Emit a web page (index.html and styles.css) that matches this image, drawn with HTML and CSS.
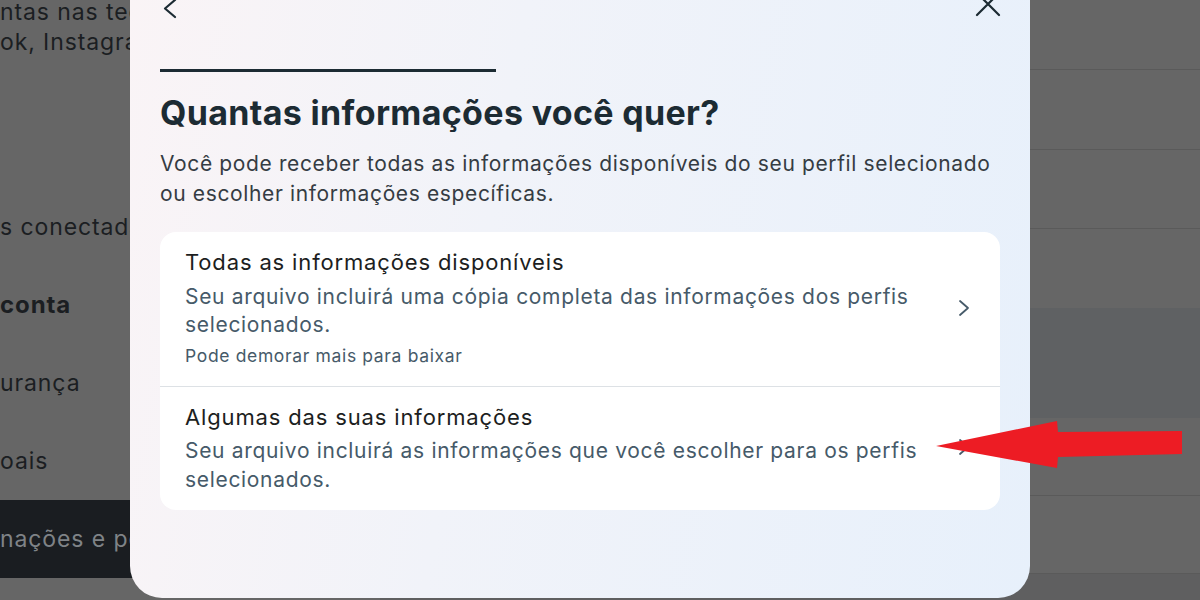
FILE: index.html
```html
<!DOCTYPE html>
<html lang="pt-BR">
<head>
<meta charset="utf-8">
<title>Baixar suas informações</title>
<link rel="stylesheet" href="styles.css">
</head>
<body>
<div class="page">
  <aside class="side">
    <p class="intro">ntas nas tecnologias da Meta<br>ok, Instagram e Meta Horizon.</p>
    <nav class="nav">
      <div class="nav-item">s conectadas</div>
      <div class="nav-item nav-head">conta</div>
      <div class="nav-item">urança</div>
      <div class="nav-item">oais</div>
      <div class="nav-item nav-active">nações e permissões</div>
    </nav>
  </aside>
  <main class="content">
    <div class="row r1"></div>
    <div class="row r2"></div>
    <div class="row r3"></div>
    <div class="row r4"></div>
    <div class="row r5 hl"></div>
    <div class="row r6"></div>
    <div class="row r7"></div>
    <div class="row r8"></div>
  </main>
</div>

<section class="modal">
  <header class="modal-head">
    <svg class="icon-back" width="18" height="20" viewBox="0 0 18 20"><path d="M13 1 L3 9.5 L13 18" fill="none" stroke="#1c2b33" stroke-width="2.2" stroke-linecap="round" stroke-linejoin="round"/></svg>
    <svg class="icon-close" width="26" height="26" viewBox="0 0 26 26"><path d="M2 2 L24 24 M24 2 L2 24" fill="none" stroke="#1c2b33" stroke-width="2.2" stroke-linecap="round"/></svg>
  </header>
  <div class="progress"></div>
  <h1 class="title">Quantas informações você quer?</h1>
  <p class="subtitle">Você pode receber todas as informações disponíveis do seu perfil selecionado ou escolher informações específicas.</p>
  <div class="card">
    <div class="option">
      <div class="option-text">
        <div class="option-title">Todas as informações disponíveis</div>
        <div class="option-desc">Seu arquivo incluirá uma cópia completa das informações dos perfis selecionados.</div>
        <div class="option-note">Pode demorar mais para baixar</div>
      </div>
      <svg class="chev" width="12" height="18" viewBox="0 0 12 18"><path d="M2 2 L10 9 L2 16" fill="none" stroke="#465a69" stroke-width="1.8" stroke-linecap="round" stroke-linejoin="round"/></svg>
    </div>
    <div class="option">
      <div class="option-text">
        <div class="option-title">Algumas das suas informações</div>
        <div class="option-desc">Seu arquivo incluirá as informações que você escolher para os perfis selecionados.</div>
      </div>
      <svg class="chev" width="12" height="18" viewBox="0 0 12 18"><path d="M2 2 L10 9 L2 16" fill="none" stroke="#465a69" stroke-width="1.8" stroke-linecap="round" stroke-linejoin="round"/></svg>
    </div>
  </div>
</section>

<svg class="arrow" width="260" height="60" viewBox="930 415 260 60">
  <polygon points="936,446 1057,421 1058,432 1182,431 1182,454 1058,457 1057,468" fill="#ed1c24"/>
</svg>
</body>
</html>
```

FILE: styles.css
```css
* { box-sizing: border-box; }
html, body {
  margin: 0;
  padding: 0;
}
body {
  width: 1200px;
  height: 600px;
  overflow: hidden;
  position: relative;
  font-family: Inter, "Noto Sans", "Liberation Sans", sans-serif;
  background: #656565;
}
.page {
  display: flex;
  height: 600px;
}
.side {
  width: 380px;
  flex: none;
  background: #666666;
  color: #1b1e22;
  overflow: hidden;
  letter-spacing: 0.9px;
}
.intro {
  margin: -3px 0 0;
  font-size: 23px;
  line-height: 30px;
  white-space: nowrap;
}
.nav {
  margin-top: 131px;
  display: flex;
  flex-direction: column;
}
.nav-item {
  height: 78px;
  line-height: 78px;
  font-size: 23px;
  white-space: nowrap;
}
.nav-head {
  font-weight: 700;
  font-size: 24px;
}
.nav-active {
  background: #1a1d21;
  color: #7f8387;
}
.content {
  flex: 1;
  display: flex;
  flex-direction: column;
  background: #666666;
}
.row {
  border-bottom: 1px solid #5a5a5a;
  flex: none;
}
.r1 { height: 70px; }
.r2 { height: 80px; }
.r3 { height: 79px; }
.r4 { height: 79px; border-bottom: none; }
.r5 { height: 110px; background: #5f6163; border-bottom: none; }
.r6 { height: 78px; }
.r7 { height: 78px; }
.r8 { flex: 1; background: #5f5f60; border-bottom: none; }

.modal {
  position: absolute;
  left: 130px;
  top: -40px;
  width: 900px;
  height: 638px;
  border-radius: 32px;
  padding: 0 30px;
  background: linear-gradient(100deg, #faf4f6 0%, #f1f3f9 40%, #e7f0fb 100%);
  display: flex;
  flex-direction: column;
}
.modal-head {
  margin-top: 28px;
  height: 40px;
  display: flex;
  align-items: center;
  justify-content: space-between;
  padding: 0 0 0 2px;
}
.icon-back { display: block; margin-top: 2px; }
.icon-close { display: block; margin-right: -1px; margin-top: -9px; }
.progress {
  margin-top: 41px;
  width: 336px;
  height: 3px;
  background: #1c2b33;
  flex: none;
}
.title {
  margin: 21px 0 0;
  font-size: 34px;
  line-height: 40px;
  font-weight: 700;
  color: #1c2b33;
  letter-spacing: 0.33px;
}
.subtitle {
  margin: 16px 0 0;
  font-size: 21px;
  line-height: 30px;
  color: #353c43;
  letter-spacing: 0.63px;
}
.card {
  margin-top: 23px;
  background: #ffffff;
  border-radius: 16px;
  display: flex;
  flex-direction: column;
}
.option {
  display: flex;
  align-items: center;
  padding: 14px 30px 16px 25px;
}
.option + .option {
  border-top: 1px solid #dde1e5;
}
.option-text {
  flex: 1;
  padding-right: 30px;
}
.option-title {
  font-size: 22px;
  line-height: 32px;
  font-weight: 400;
  color: #1c1e21;
  letter-spacing: 0.85px;
}
.option-desc {
  margin-top: 4.5px;
  font-size: 21px;
  line-height: 28.5px;
  color: #465a69;
  letter-spacing: 0.68px;
}
.option-note {
  margin-top: 2px;
  font-size: 17.5px;
  line-height: 28px;
  color: #465a69;
  letter-spacing: 0.65px;
}
.chev { display: block; flex: none; }
.arrow {
  position: absolute;
  left: 930px;
  top: 415px;
}
```
